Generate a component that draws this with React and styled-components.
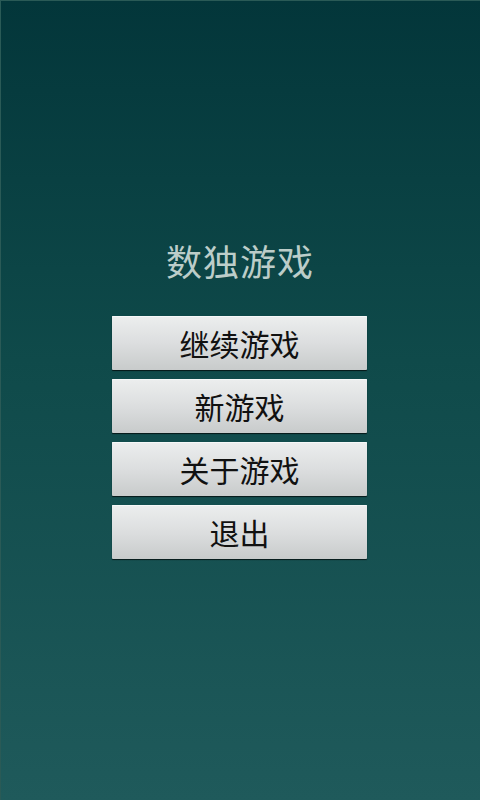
import styled, { createGlobalStyle } from 'styled-components';

const GlobalStyle = createGlobalStyle`
  html, body {
    margin: 0;
    padding: 0;
    height: 100%;
  }
  body {
    font-family: "Noto Sans CJK SC", "Noto Sans", sans-serif;
  }
  #root {
    height: 100%;
  }
`;

const Screen = styled.div`
  box-sizing: border-box;
  height: 800px;
  width: 480px;
  background: linear-gradient(to bottom, #03363a 0%, #0f4a4a 45%, #1f5a5b 100%);
  box-shadow: inset 1px 1px 0 #2a5a56;
  display: flex;
  flex-direction: column;
  align-items: center;
  padding-top: 234px;
`;

const Title = styled.h1`
  margin: 0;
  font-size: 36px;
  font-weight: 400;
  line-height: 52px;
  color: #bccdc9;
  letter-spacing: 1px;
`;

const Menu = styled.div`
  display: flex;
  flex-direction: column;
  gap: 9px;
  margin-top: 30px;
  margin-right: 1px;
`;

const MenuButton = styled.button`
  width: 255px;
  height: 54px;
  border: none;
  border-radius: 1px;
  background: linear-gradient(to bottom, #eceeee 0%, #dcdedf 50%, #c8cbcb 100%);
  box-shadow: 0 1px 1px rgba(0, 0, 0, 0.7), inset 0 1px 0 #f6f8f8;
  font-family: "Noto Sans CJK SC", "Noto Sans", sans-serif;
  font-size: 30px;
  line-height: 54px;
  color: #111;
  padding: 0;
  cursor: pointer;
`;

const items = ['继续游戏', '新游戏', '关于游戏', '退出'];

export default function App() {
  return (
    <>
      <GlobalStyle />
      <Screen>
        <Title>数独游戏</Title>
        <Menu>
          {items.map((label) => (
            <MenuButton key={label}>{label}</MenuButton>
          ))}
        </Menu>
      </Screen>
    </>
  );
}
